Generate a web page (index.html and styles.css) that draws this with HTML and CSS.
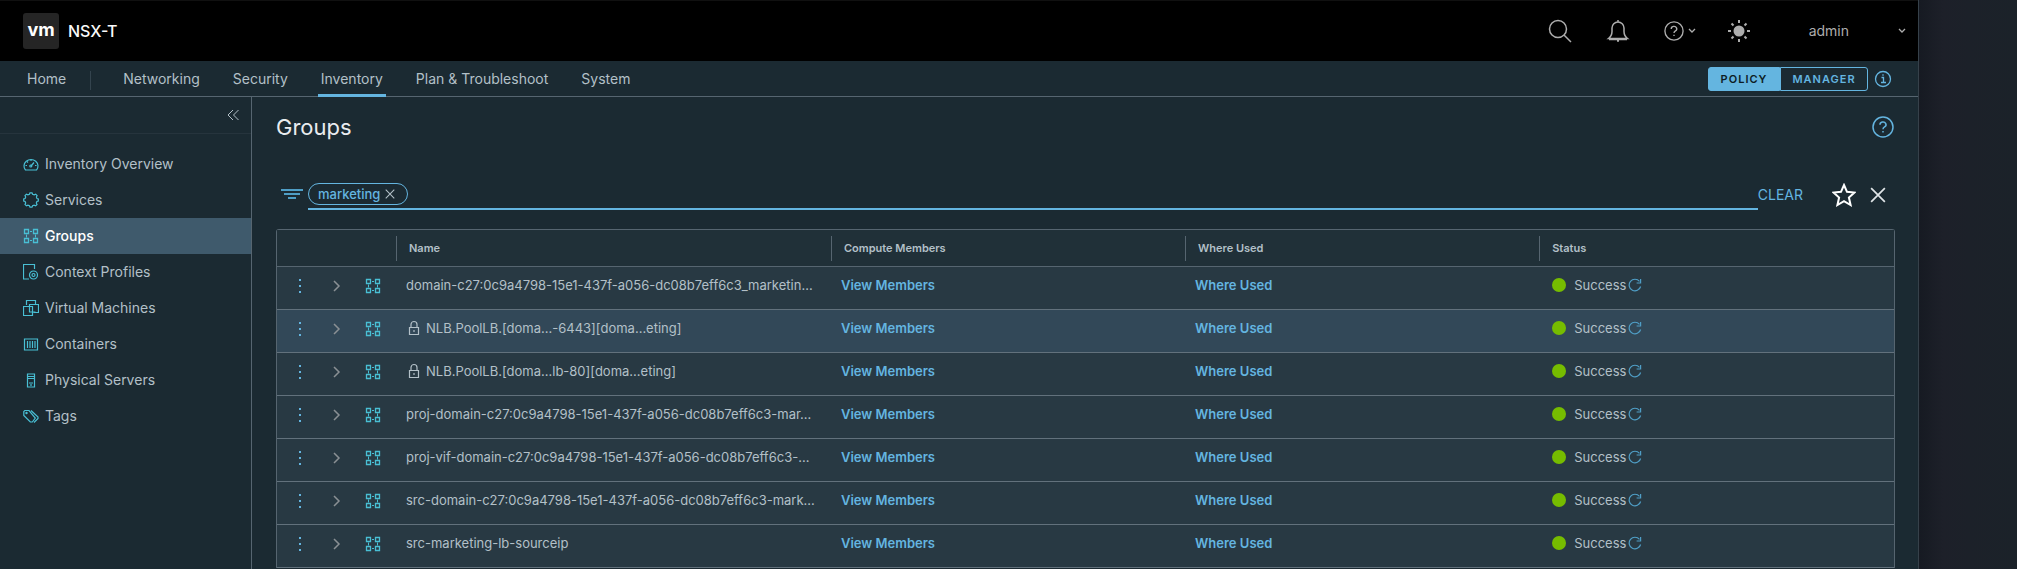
FILE: index.html
```html
<!DOCTYPE html>
<html lang="en">
<head>
<meta charset="utf-8">
<title>NSX-T - Groups</title>
<link rel="stylesheet" href="styles.css">
</head>
<body>
<svg class="sprite" aria-hidden="true">
  <symbol id="i-group" viewBox="0 0 16 16"><path d="M1.500 1.500h4v4h-4zM10.500 1.500h4v4h-4zM1.500 10.500h4v4h-4zM10.500 10.500h4v4h-4z" stroke-width="1.300"/><path d="M7 3.500h2M7 12.500h2M3.500 6.500v3M12.500 6.500v3" stroke-width="1"/></symbol>
  <symbol id="i-chev" viewBox="0 0 8 12"><path d="M1 1l5 5-5 5" stroke-width="1.500"/></symbol>
  <symbol id="i-down" viewBox="0 0 8 6"><path d="M1 1l3 3 3-3" stroke-width="1.300"/></symbol>
  <symbol id="i-refresh" viewBox="0 0 14 14"><path d="M12.600 8.500A5.800 5.800 0 1 1 11.500 3.400M12.600 1v4H8.600" stroke-width="1.200"/></symbol>
  <symbol id="i-lock" viewBox="0 0 12 16"><path d="M1.500 7.500h9v7h-9zM3 7.500V4.500a3 3 0 0 1 6 0v3M6 10v2" stroke-width="1.200"/></symbol>
  <symbol id="i-help" viewBox="0 0 22 22"><path stroke-width="1.500" d="M11 1a10 10 0 1 1 0 20a10 10 0 1 1 0-20zM8 8.800a3 2.700 0 1 1 4.600 2.100c-1 .6-1.600 1-1.600 2.300M11 15v1.500"/></symbol>
  <symbol id="i-x" viewBox="0 0 14 14"><path d="M1 1l12 12M13 1L1 13" stroke-width="1.500"/></symbol>
</svg>
<div class="page">
  <div class="app">
    <header class="top">
      <span class="logo">vm</span>
      <span class="product">NSX-T</span>
      <div class="tools">
        <button class="tool tool-search" aria-label="Search"><svg width="24" height="24" viewBox="0 0 24 24"><circle cx="10" cy="10" r="8.500"/><path d="M16 16l7 7"/></svg></button>
        <button class="tool tool-bell" aria-label="Notifications"><svg width="24" height="24" viewBox="0 0 24 24"><path d="M2.500 19.500h19c-2.500-2-3.500-4-3.500-7V9A6 6 0 0 0 6 9v3.500c0 3-1 5-3.500 7zM12 1v2M3 20.500h18M11 22h2"/></svg></button>
        <button class="tool tool-help" aria-label="Help"><svg width="20" height="20"><use href="#i-help"/></svg><svg width="8" height="6"><use href="#i-down"/></svg></button>
        <button class="tool" aria-label="Theme"><svg width="24" height="24" viewBox="0 0 24 24"><circle class="disc" cx="12" cy="12" r="5.500"/><path stroke-width="2" d="M12 1v3M12 20v3M1 12h3M20 12h3M4.500 4.500l2 2M17.500 17.500l2 2M4.500 19.500l2-2M17.500 6.500l2-2"/></svg></button>
        <button class="user">admin<svg width="8" height="6"><use href="#i-down"/></svg></button>
      </div>
    </header>
    <nav class="nav">
      <a class="tab tab-home" href="#">Home</a>
      <span class="rule"></span>
      <a class="tab" href="#">Networking</a>
      <a class="tab" href="#">Security</a>
      <a class="tab on" href="#">Inventory</a>
      <a class="tab" href="#">Plan &amp; Troubleshoot</a>
      <a class="tab" href="#">System</a>
      <div class="mode">
        <button class="seg seg-on">POLICY</button><button class="seg">MANAGER</button>
        <svg class="info" width="18" height="18" viewBox="0 0 18 18"><circle cx="9" cy="9" r="7.500"/><path d="M7.500 7.500H9.500V12.500M7 12.500h5M9 4.300v1.500"/></svg>
      </div>
    </nav>
    <div class="body">
      <aside class="side">
        <button class="collapse" aria-label="Collapse"><svg width="12" height="12" viewBox="0 0 12 12"><path d="M6 1L1 6l5 5M11.500 1l-5 5 5 5"/></svg></button>
        <ul class="menu">
          <li><a href="#"><svg viewBox="0 0 16 16"><path d="M2.500 14A7 6.500 0 1 1 13.500 14zM8 10L11 6.500"/><circle cx="7.800" cy="10" r="1"/><path d="M8 3.500v1.500M2.500 9.500h1.500M12 9.500h1.500M4 5.500l1 1"/></svg>Inventory Overview</a></li>
          <li><a href="#"><svg viewBox="0 0 16 16"><path d="M7 .8h2l.6 1.500 1.600.6 1.500-.7 1.400 1.400-.7 1.500.6 1.500L15.300 7v2l-1.400.5-.6 1.500.7 1.500-1.400 1.400-1.500-.7-1.500.6L9 15.200H7l-.6-1.500-1.500-.6-1.500.7-1.400-1.400.7-1.500L2.100 9.500.7 9V7l1.400-.5.6-1.500L2 3.600l1.400-1.400 1.500.7 1.500-.6z"/></svg>Services</a></li>
          <li><a class="on" href="#"><svg><use href="#i-group"/></svg>Groups</a></li>
          <li><a href="#"><svg viewBox="0 0 16 16"><path d="M6 15H.500V.500h11V5"/><circle cx="10.500" cy="11" r="4"/><circle cx="10.500" cy="11" r="1.500"/></svg>Context Profiles</a></li>
          <li><a href="#"><svg viewBox="0 0 16 16"><path d="M3.500 5V.500h9V4M6.500 10.500v-6h9v8h-5M.500 6.500h9v9h-9zM6.500 8v4h6"/></svg>Virtual Machines</a></li>
          <li><a href="#"><svg viewBox="0 0 16 16"><path d="M1.500 3h13v11h-13zM4.500 5v7M7 5v7M9.500 5v7M12 5v7"/></svg>Containers</a></li>
          <li><a href="#"><svg viewBox="0 0 16 16"><path d="M4.500 2h7v13h-7zM5 4.500h6M5 6.500h6M6 11h4M8 12v2"/></svg>Physical Servers</a></li>
          <li><a href="#"><svg viewBox="0 0 16 16"><path d="M.800 3.500v4l6.500 6.500h2l3-4L6 2.500H1.800zM8 2.500l7 6.500v1.500l-4 4"/><circle cx="3.500" cy="5" r=".6"/></svg>Tags</a></li>
        </ul>
      </aside>
      <main class="main">
        <div class="title"><h1>Groups</h1><button class="help" aria-label="Help"><svg width="22" height="22"><use href="#i-help"/></svg></button></div>
        <div class="filter">
          <svg class="funnel" width="22" height="14" viewBox="0 0 22 14"><path d="M0 2h22M3 6h16M7 10h8"/></svg>
          <div class="field"><span class="chip">marketing<button aria-label="Remove"><svg width="10" height="10"><use href="#i-x"/></svg></button></span><input class="query" aria-label="Filter"></div>
          <button class="clear">CLEAR</button>
          <button class="star" aria-label="Favorite"><svg width="24" height="24" viewBox="0 0 24 24"><path d="M12 2l3 6.800 7.500.7-5.600 5 1.700 7.500-6.600-3.900L5.400 22l1.700-7.500-5.600-5L9 8.800z"/></svg></button>
          <button class="close" aria-label="Close"><svg width="16" height="16"><use href="#i-x"/></svg></button>
        </div>
        <table class="grid">
          <colgroup><col class="c-act"><col class="c-name"><col class="c-mid"><col class="c-mid"><col></colgroup>
          <thead><tr><th></th><th><span>Name</span></th><th><span>Compute Members</span></th><th><span>Where Used</span></th><th><span>Status</span></th></tr></thead>
          <tbody id="rows"></tbody>
        </table>
      </main>
    </div>
  </div>
  <div class="backdrop"></div>
</div>
<script src="app.js"></script>
</body>
</html>
```
FILE: styles.css
```css
* { box-sizing: border-box; }
body { margin: 0; background: #1b2229; color: #b3c0c8; font: 14px/20px Inter, sans-serif; overflow: hidden; }
a { color: inherit; text-decoration: none; }
button { margin: 0; padding: 0; border: 0; background: none; color: inherit; font: inherit; cursor: pointer; }
svg { fill: none; stroke: currentColor; flex: none; display: block; }
.sprite { display: none; }
.page { display: flex; height: 100vh; overflow: hidden; }
.app { flex: 1; min-width: 0; display: flex; flex-direction: column; background: #1b2a32; border-right: 1px solid #36414a; }
.backdrop { width: 98px; background: linear-gradient(90deg, #161a22, #1d2029 24px, #1c2129 50px, #1b2229); }

.top { height: 61px; flex: none; display: flex; align-items: center; background: #000; border-top: 1px solid #101010; padding: 0 12px 0 23px; }
.logo { width: 36px; height: 36px; border-radius: 3px; background: #252525; color: #fff; font-size: 18px; font-weight: 700; line-height: 33px; text-align: center; }
.product { margin-left: 9px; color: #fafafa; font-size: 16px; font-weight: 500; }
.tools { margin-left: auto; display: flex; align-items: center; color: #adadad; }
.tool { width: 60px; display: flex; justify-content: center; align-items: center; gap: 4px; stroke-width: 1.5; }
.tool-search { width: 50px; }
.tool-bell { width: 66px; }
.tool-help { width: 58px; }
.disc { fill: currentColor; stroke: none; }
.user { display: flex; align-items: center; gap: 49px; margin-left: 40px; }

.nav { height: 36px; flex: none; display: flex; border-bottom: 1px solid #566570; padding: 0 26px 0 27px; }
.tab { margin-right: 27px; padding: 8px 3px 0; }
.tab-home { margin-right: 21px; padding-left: 0; }
.tab.on { border-bottom: 3px solid #64b5e0; margin-bottom: -1px; }
.rule { width: 1px; height: 19px; margin: 10px 29px 0 0; background: #34444e; }
.mode { margin-left: auto; display: flex; align-items: center; }
.seg { width: 88px; height: 24px; border: 1px solid #64b5e0; border-radius: 0 3px 3px 0; color: #64b5e0; font-size: 11px; font-weight: 600; letter-spacing: 1px; }
.seg-on { width: 72px; border-radius: 3px 0 0 3px; background: #64b5e0; color: #0d1c24; }
.info { margin-left: 6px; color: #64b5e0; stroke-width: 1.3; }

.body { flex: 1; min-height: 0; display: flex; }
.side { width: 252px; flex: none; border-right: 1px solid #566570; }
.collapse { width: 100%; height: 37px; display: flex; align-items: center; justify-content: flex-end; padding-right: 12px; border-bottom: 1px solid #26343d; }
.menu { list-style: none; margin: 12px 0 0; padding: 0; }
.menu a { height: 36px; display: flex; align-items: center; gap: 6px; padding-left: 23px; }
.menu svg { width: 16px; height: 16px; color: #49bfd4; stroke-width: 1.2; }
.menu .on { background: #3f5a6c; color: #fff; font-weight: 500; }

.main { flex: 1; min-width: 0; padding: 14px 23px 0 24px; }
.title { display: flex; align-items: center; justify-content: space-between; height: 32px; }
h1 { margin: 0; color: #e9ecef; font-size: 22px; font-weight: 400; }
.help { margin-right: 1px; color: #64b5e0; }
.filter { display: flex; align-items: center; height: 31px; margin: 36px 0 19px; }
.funnel { margin: 0 5px; stroke-width: 2; color: #4f9ec6; }
.field { flex: 1; height: 31px; display: flex; align-items: center; border-bottom: 2px solid #64b5e0; }
.chip { display: flex; align-items: center; gap: 5px; height: 22px; padding: 0 12px 0 9px; border: 1px solid #64b5e0; border-radius: 11px; color: #64b5e0; font-size: 13px; font-weight: 500; }
.chip button { color: #b3c0c8; }
.query { flex: 1; min-width: 0; border: 0; outline: 0; background: none; color: inherit; font: inherit; }
.clear { color: #64b5e0; }
.star { margin-left: 29px; color: #fff; stroke-width: 2; }
.close { margin: 0 9px 0 14px; color: #e0e5e8; }

.grid { width: 100%; table-layout: fixed; border: 1px solid #566570; border-bottom: 0; border-radius: 3px 3px 0 0; border-spacing: 0; font-size: 13px; }
.c-act { width: 119px; }
.c-name { width: 26.9%; }
.c-mid { width: 21.9%; }
th { height: 37px; padding: 0; background: #203038; border-bottom: 1px solid #566570; text-align: left; font-size: 11px; font-weight: 600; }
th span { display: block; height: 25px; line-height: 25px; padding-left: 12px; border-left: 1px solid #566570; }
td { height: 43px; padding: 0 0 6px 10px; background: #283943; border-bottom: 1px solid #62717c; white-space: nowrap; overflow: hidden; }
td:first-child { padding: 0 0 4px; }
td:last-child { padding-left: 13px; }
.hover td { background: #324858; }
.acts, .name, .status { display: flex; align-items: center; }
.acts { padding-left: 21px; }
.dots { color: #64b5e0; }
.dots svg { fill: currentColor; stroke: none; }
.expand { margin: 0 24px 0 31px; color: #8a9094; }
.type { color: #49bfd4; }
.name svg { margin: 0 6px 0 2px; }
td a { color: #64b5e0; font-weight: 600; }
.dot { width: 14px; height: 14px; border-radius: 50%; background: #76bc00; }
.status { gap: 8px; }
.status button { margin-left: -6px; color: #4f9ec6; }
```
FILE: app.js
```js
const groups = [
  { name: "domain-c27:0c9a4798-15e1-437f-a056-dc08b7eff6c3_marketin…" },
  { name: "NLB.PoolLB.[doma...-6443][doma...eting]", locked: true, hover: true },
  { name: "NLB.PoolLB.[doma...lb-80][doma...eting]", locked: true },
  { name: "proj-domain-c27:0c9a4798-15e1-437f-a056-dc08b7eff6c3-mar…" },
  { name: "proj-vif-domain-c27:0c9a4798-15e1-437f-a056-dc08b7eff6c3-…" },
  { name: "src-domain-c27:0c9a4798-15e1-437f-a056-dc08b7eff6c3-mark…" },
  { name: "src-marketing-lb-sourceip" }
];
const lock = '<svg width="12" height="16"><use href="#i-lock"/></svg>';
document.getElementById("rows").innerHTML = groups.map(g => `
  <tr class="${g.hover ? "hover" : ""}">
    <td><div class="acts">
      <button class="dots" aria-label="Actions"><svg width="4" height="16" viewBox="0 0 4 16"><path d="M1 1h2v2H1zM1 7h2v2H1zM1 13h2v2H1z"/></svg></button>
      <button class="expand" aria-label="Expand"><svg width="8" height="12"><use href="#i-chev"/></svg></button>
      <svg class="type" width="16" height="16"><use href="#i-group"/></svg>
    </div></td>
    <td><div class="name">${g.locked ? lock : ""}${g.name}</div></td>
    <td><a href="#">View Members</a></td>
    <td><a href="#">Where Used</a></td>
    <td><div class="status"><span class="dot"></span>Success<button aria-label="Refresh"><svg width="14" height="14"><use href="#i-refresh"/></svg></button></div></td>
  </tr>`).join("");
```
